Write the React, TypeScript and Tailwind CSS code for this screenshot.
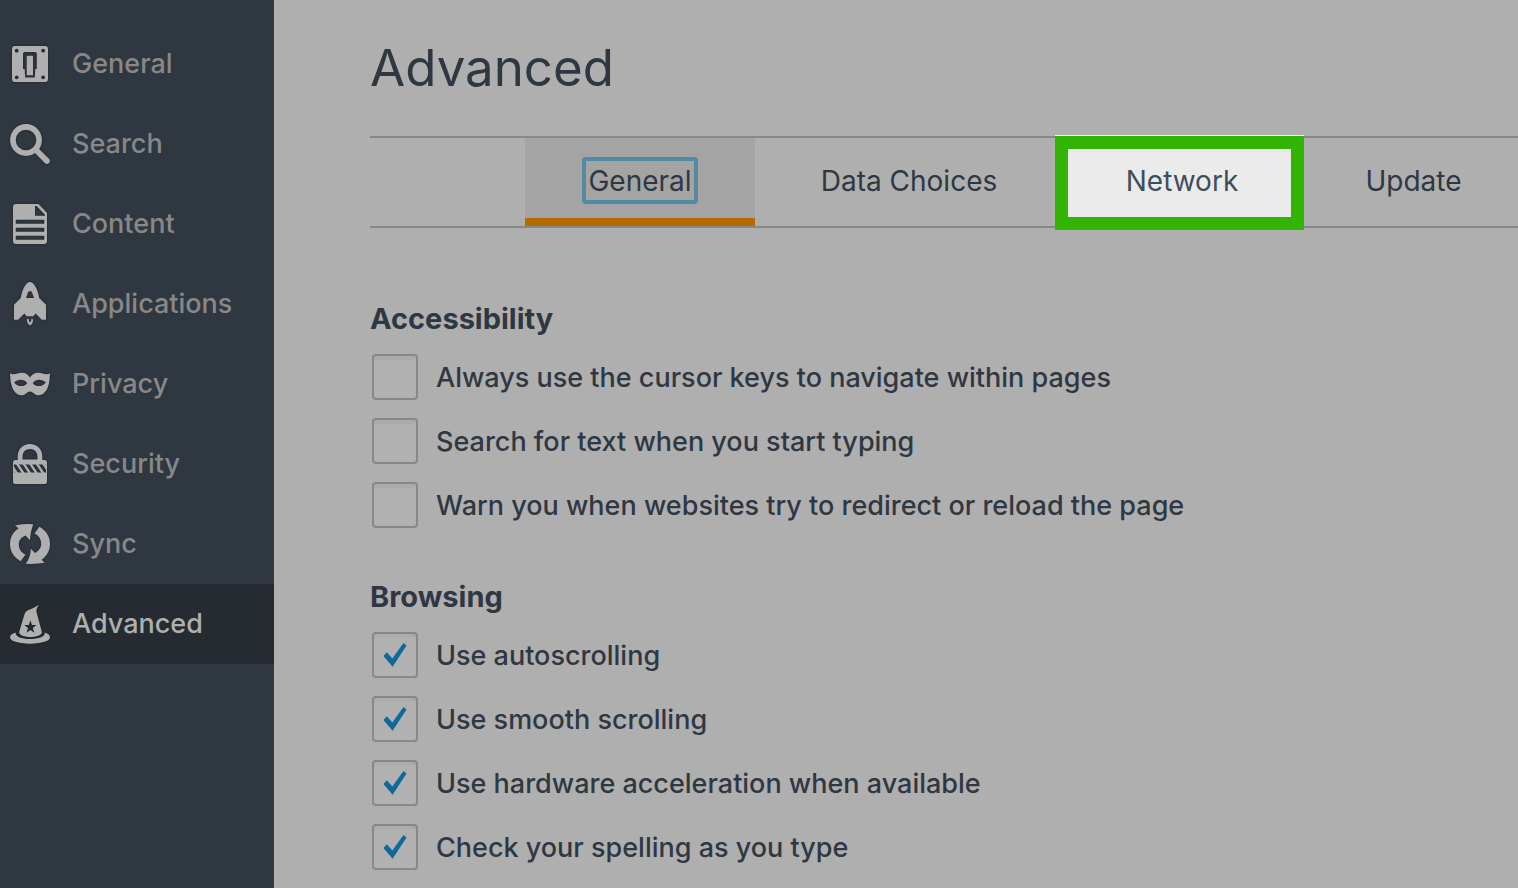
import { useState } from "react";
import type { ReactNode } from "react";

const stripes = [0, 1, 2, 3, 4, 5];

const icons: Record<string, ReactNode> = {
  General: (
    <path
      fillRule="evenodd"
      d="M5 2H35Q38 2 38 5V35Q38 38 35 38H5Q2 38 2 35V5Q2 2 5 2ZM6.7 4.8a1.9 1.9 0 1 0 0 3.8a1.9 1.9 0 1 0 0-3.8ZM33.1 4.8a1.9 1.9 0 1 0 0 3.8a1.9 1.9 0 1 0 0-3.8ZM6.7 31.4a1.9 1.9 0 1 0 0 3.8a1.9 1.9 0 1 0 0-3.8ZM33.1 31.4a1.9 1.9 0 1 0 0 3.8a1.9 1.9 0 1 0 0-3.8ZM14.2 8H25.6L26.8 9.2V25H25.3L24.8 33.6H15.2L14.6 25H13V9.2ZM17.6 11.7Q16.7 11.7 16.7 12.6V31.2H23V12.6Q23 11.7 22.2 11.7Z"
    />
  ),
  Search: (
    <g fill="none" stroke="currentColor" strokeWidth="5.6">
      <circle cx="16" cy="16" r="13.1" />
      <path d="M26 26L36.9 36.9" strokeLinecap="round" strokeWidth="5.8" />
    </g>
  ),
  Content: (
    <path
      fillRule="evenodd"
      d="M6 0H28.5L37 9V37Q37 40 34 40H6Q3 40 3 37V3Q3 0 6 0ZM25 2V11.7H35V10.8L26.6 2ZM6.6 15.7Q5.7 15.7 5.7 16.6V18.8Q5.7 19.7 6.6 19.7H33.4Q34.3 19.7 34.3 18.8V16.6Q34.3 15.7 33.4 15.7ZM6.6 23.7Q5.7 23.7 5.7 24.6V26.8Q5.7 27.7 6.6 27.7H33.4Q34.3 27.7 34.3 26.8V24.6Q34.3 23.7 33.4 23.7ZM6.6 31.7Q5.7 31.7 5.7 32.6V34.8Q5.7 35.7 6.6 35.7H33.4Q34.3 35.7 34.3 34.8V32.6Q34.3 31.7 33.4 31.7Z"
    />
  ),
  Applications: (
    <>
      <path
        fillRule="evenodd"
        d="M20 -2C23.8 -2 27.9 5 29.2 14L36 20.7V35.7H31.8L25.6 29.6L23.4 32.3H16.6L14.4 29.6L8.2 35.7H4V20.7L10.8 14C12.1 5 16.2 -2 20 -2ZM20 7Q18.6 7 18 8.6L16 14H24L22 8.6Q21.4 7 20 7Z"
      />
      <path d="M17.2 34.8H18.6Q18.6 37.6 20 38.4Q21.4 37.6 21.4 34.8H22.8C23.6 38 22.2 40 20 41.6C17.8 40 16.4 38 17.2 34.8Z" />
    </>
  ),
  Privacy: (
    <path
      fillRule="evenodd"
      d="M0 9.6C5 11.5 7.5 8.7 12 8.8C15.5 8.9 18 10.5 20 13.5C22 10.5 24.5 8.9 28 8.8C32.5 8.7 35 11.5 40 9.6C39.6 12.5 39.8 17 38.7 20.5C37 27 33.5 31.2 28.5 31.2C24.5 31.2 23 27.4 20 27.4C17 27.4 15.5 31.2 11.5 31.2C6.5 31.2 3 27 1.3 20.5C0.2 17 0.4 12.5 0 9.6ZM4.2 18.4C7 22.5 14 23.6 17.2 19.2C14 14.8 8 15 4.2 18.4ZM35.8 18.4C33 22.5 26 23.6 22.8 19.2C26 14.8 32 15 35.8 18.4Z"
    />
  ),
  Security: (
    <>
      <path
        fillRule="evenodd"
        d="M5.5 16H7.7V12.3C7.7 5 13 0 20 0S32.3 5 32.3 12.3V16H34.5Q37 16 37 18.5V20.6H3V18.5Q3 16 5.5 16ZM12.6 15.4H27.4V12.3C27.4 8 24.5 4.9 20 4.9S12.6 8 12.6 12.3Z"
      />
      <path d="M3 28.6H37V37.5Q37 40 34.5 40H5.5Q3 40 3 37.5Z" />
      <path d="M3 20H4V29H3ZM36 20H37V29H36Z" />
      <clipPath id="lock-band">
        <path d="M3 20H37V29H3Z" />
      </clipPath>
      <g clipPath="url(#lock-band)">
        {stripes.map((n) => (
          <path key={n} d={`M${n * 6.6 - 0.8} 20h2.9l6 9h-2.9Z`} />
        ))}
      </g>
    </>
  ),
  Sync: (
    <>
      <path d="M10.6 37.2C3.5 33.2 0 27 0 20C0 13.5 3.3 7.6 8.5 4.2L5 1.4Q14 -0.4 23.2 0.2Q20.2 8 19.9 16.2L15.6 11.6C11.5 13.2 8.8 16.2 8.8 20.2C8.8 24.8 11.2 28.6 15.5 30.6Z" />
      <path d="M29.4 2.8C36.5 6.8 40 13 40 20C40 26.5 36.7 32.4 31.5 35.8L34.6 38.8Q26 40.4 15.8 39.8Q20.6 33 20.9 24.8L25 29C28.8 27 31.2 23.8 31.2 19.8C31.2 15.2 28.8 11.4 24.5 9.4Z" />
    </>
  ),
  Advanced: (
    <>
      <path
        fillRule="evenodd"
        d="M28.7 0.8C26.8 4 26 6 26.6 8.5L32 28.4C30 34.4 11 34.4 9 28.4L14.6 10Q15.3 7.6 17.6 6.6C21 5 26 3 28.7 0.8ZM20.4 16.6L18.8 21H14.4L18 24L16.5 28.8L20.4 26L24.3 28.8L22.8 24L26.4 21H22Z"
      />
      <path d="M5.6 28.6C-1.4 30.6 -1.6 35.2 4 37.3C13 40.6 27 40.6 36 37.3C41.6 35.2 41.4 30.6 34.8 28.6C35.2 32.5 29 35 20 35S5.2 32.5 5.6 28.6Z" />
    </>
  ),
};

const categories = ["General", "Search", "Content", "Applications", "Privacy", "Security", "Sync", "Advanced"];

function Option({ label, checked = false }: { label: string; checked?: boolean }) {
  return (
    <label className="flex h-[46px] items-center gap-[18px] text-[27px] leading-[34px] font-medium">
      <span className="grid size-[46px] shrink-0">
        <input
          type="checkbox"
          defaultChecked={checked}
          className="peer col-start-1 row-start-1 size-[46px] appearance-none rounded border-2 border-[#888888] bg-[#b1b1b1] shadow-[inset_0_4px_0_#acacac]"
        />
        <svg
          viewBox="0 0 46 46"
          aria-hidden="true"
          className="pointer-events-none invisible col-start-1 row-start-1 size-[46px] fill-[#0d6a9b] peer-checked:visible"
        >
          <path d="M11.4 24L14.8 20.2L20.4 26.6L31.4 11L34.6 13.4L20.6 34.8Z" />
        </svg>
      </span>
      <span className="pt-[2px] whitespace-nowrap">{label}</span>
    </label>
  );
}

function Section({ title, children }: { title: string; children: ReactNode }) {
  return (
    <section>
      <h2 className="pb-[18px] text-[29px] leading-[34px] font-bold">{title}</h2>
      <div className="flex flex-col gap-[18px] pl-0.5">{children}</div>
    </section>
  );
}

const tabClass = "flex h-[88px] shrink-0 items-center justify-center text-[28px] leading-[34px]";

export default function App() {
  const [active, setActive] = useState("Advanced");
  return (
    <div className="flex h-screen overflow-hidden bg-[#afafaf] font-['Inter','Liberation_Sans',sans-serif] text-[#2f3842]">
      <nav className="w-[274px] shrink-0 bg-[#2f3740] pt-6" aria-label="Categories">
        {categories.map((name) => (
          <button
            key={name}
            type="button"
            onClick={() => setActive(name)}
            className={`flex h-20 w-full items-center gap-[22px] pl-[10px] text-left text-[27px] leading-[34px] font-medium ${
              name === active ? "bg-[#252b30] text-[#afafaf]" : "text-[#888888]"
            }`}
          >
            <svg
              viewBox="0 0 40 40"
              aria-hidden="true"
              className="size-10 shrink-0 overflow-visible fill-current text-[#afafaf] drop-shadow-[0_0_1px_#1c2126]"
            >
              {icons[name]}
            </svg>
            <span>{name}</span>
          </button>
        ))}
      </nav>

      <main className="min-w-0 flex-1 overflow-hidden pt-9 pl-24">
        <h1 className="text-[51px] leading-[64px]">Advanced</h1>

        <div className="mt-9 flex border-y-2 border-[#888888] pl-[155px]" role="tablist">
          <button
            type="button"
            role="tab"
            aria-selected="true"
            className={`${tabClass} w-[230px] border-b-8 border-[#b56a00] bg-[#a4a4a4] pt-1`}
          >
            <span className="flex h-[47px] items-center rounded border-4 border-[#5389a2] px-[2px] pt-[2px]">
              General
            </span>
          </button>
          <button type="button" role="tab" aria-selected="false" className={`${tabClass} w-[308px] pb-[2px]`}>
            Data Choices
          </button>
          <button type="button" role="tab" aria-selected="false" className={`${tabClass} relative w-[238px] pb-[2px]`}>
            <span className="absolute -top-[3px] -right-[3px] -bottom-1 -left-2 border-t border-[#f4f4f4]">
              <span className="block h-full border-[13px] border-[#31b404] bg-[#ebebeb]" />
            </span>
            <span className="relative text-[#3f4e5b]">Network</span>
          </button>
          <button type="button" role="tab" aria-selected="false" className={`${tabClass} w-[225px] pb-[2px]`}>
            Update
          </button>
        </div>

        <div className="flex flex-col gap-[52px] pt-[74px]">
          <Section title="Accessibility">
            <Option label="Always use the cursor keys to navigate within pages" />
            <Option label="Search for text when you start typing" />
            <Option label="Warn you when websites try to redirect or reload the page" />
          </Section>
          <Section title="Browsing">
            <Option label="Use autoscrolling" checked />
            <Option label="Use smooth scrolling" checked />
            <Option label="Use hardware acceleration when available" checked />
            <Option label="Check your spelling as you type" checked />
          </Section>
        </div>
      </main>
    </div>
  );
}
